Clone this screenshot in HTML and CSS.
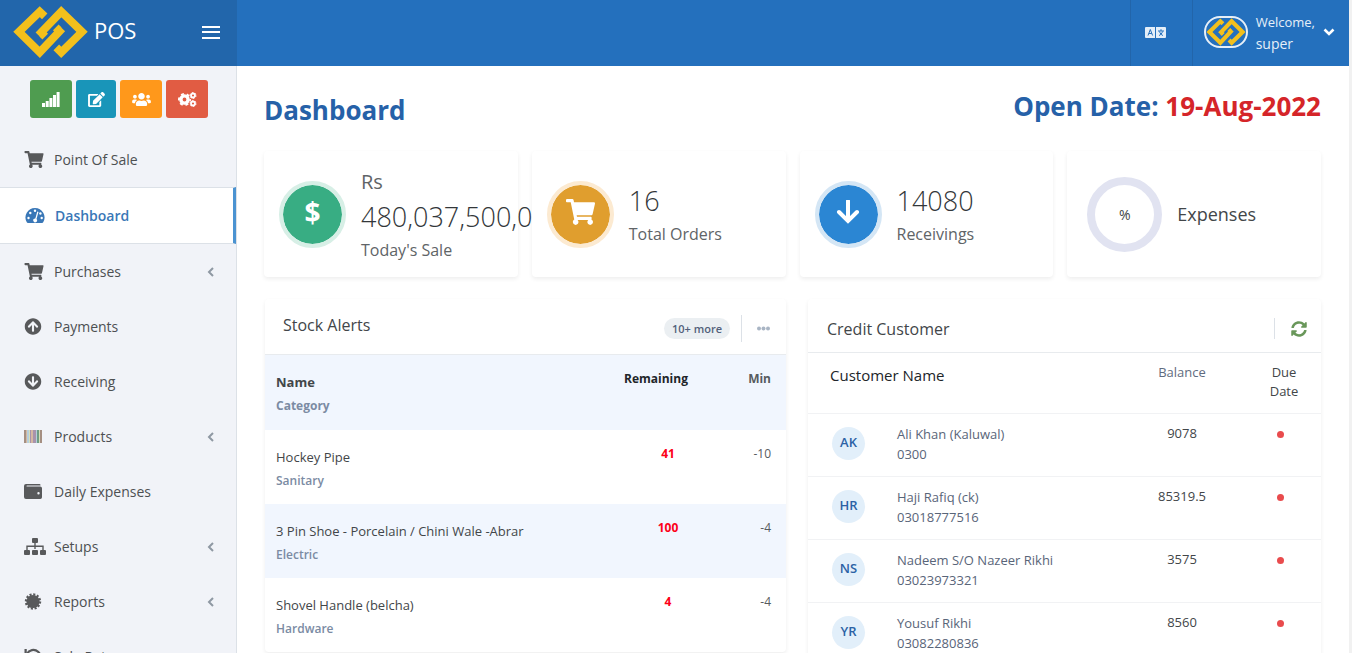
FILE: index.html
```
<!DOCTYPE html>
<html lang="en">
<head>
  <meta charset="UTF-8">
  <meta name="viewport" content="width=device-width, initial-scale=1.0">
  <title>POS - Dashboard</title>
  <link rel="stylesheet" href="styles.css">
</head>
<body>
  <!-- shared icons -->
  <svg class="sprite" aria-hidden="true">
    <symbol id="logo" viewBox="38 18 227 161">
      <g fill="none" stroke="#f3c01c" stroke-width="24" stroke-miterlimit="4">
        <path d="M134 51L119 37L56 98L119 160L187 88"/>
        <path d="M169 145L184 160L247 98L184 37L115 108"/>
      </g>
      <path fill="#f3c01c" d="M118 112l9 9 17-17-9-9zM185 85l-9-9-17 17 9 9z"/>
    </symbol>
    <symbol id="cart" viewBox="0 0 576 512">
      <path d="M528.12 301.319l47.273-208C578.806 78.301 567.391 64 551.99 64H159.208l-9.166-44.81C147.758 8.021 137.93 0 126.529 0H24C10.745 0 0 10.745 0 24v16c0 13.255 10.745 24 24 24h69.883l70.248 343.435C147.325 417.1 136 435.222 136 456c0 30.928 25.072 56 56 56s56-25.072 56-56c0-15.674-6.447-29.835-16.824-40h209.647C430.447 426.165 424 440.326 424 456c0 30.928 25.072 56 56 56s56-25.072 56-56c0-22.172-12.888-41.332-31.579-50.405l5.517-24.276c3.413-15.018-8.002-29.319-23.403-29.319H218.117l-6.545-32h293.145c11.206 0 20.92-7.754 23.403-18.681z"/>
    </symbol>
    <symbol id="chevron" viewBox="0 0 8 10">
      <path d="M6 1L2 5l4 4" fill="none" stroke="currentColor" stroke-width="2"/>
    </symbol>
  </svg>

  <header class="navbar">
    <div class="brand">
      <a class="brand-link" href="#">
        <svg class="brand-logo"><use href="#logo"/></svg>
        <span>POS</span>
      </a>
      <button class="menu-toggle" type="button" aria-label="Toggle menu">
        <svg width="18" height="13" viewBox="0 0 18 13"><path d="M0 0h18v2H0zM0 5h18v2H0zM0 11h18v2H0z" fill="#fff"/></svg>
      </button>
    </div>
    <div class="nav-right">
      <button class="nav-lang" type="button" aria-label="Language">
        <svg width="21" height="11" viewBox="0 0 21 11">
          <rect width="21" height="11" rx="1" fill="#e4eef8"/>
          <path d="M10.500 0v11" stroke="#2470bd"/>
          <g fill="none" stroke="#2470bd">
            <path d="M3 8.500L5.300 2.500 7.600 8.500M3.800 6.500h3"/>
            <path d="M13 4h6M16 2.200V4M14.500 4.500c.5 2 2 3.500 3.500 4M17.500 4.500c-.5 2-2 3.500-3.500 4"/>
          </g>
        </svg>
      </button>
      <button class="nav-user" type="button">
        <span class="avatar"><svg><use href="#logo"/></svg></span>
        <span class="user-text"><small>Welcome,</small>super</span>
        <svg width="12" height="8" viewBox="0 0 12 8"><path d="M1.500 1.500L6 6l4.500-4.500" fill="none" stroke="#fff" stroke-width="2.600"/></svg>
      </button>
    </div>
  </header>

  <div class="page">
    <aside class="sidebar">
      <div class="shortcuts">
        <button class="btn btn-success" type="button" aria-label="Statistics">
          <svg width="18" height="15" viewBox="0 0 18 15"><path d="M0 11h3v4H0zM3.700 9h3v6h-3zM7.400 6h3v9h-3zM11 3h3v12h-3zM14.600 0h3v15h-3z"/></svg>
        </button>
        <button class="btn btn-info" type="button" aria-label="Edit">
          <svg width="17" height="15" viewBox="0 0 576 512"><path d="M402.600 83.200l90.200 90.200c3.800 3.800 3.800 10 0 13.800L274.400 405.600l-92.800 10.300c-12.400 1.400-22.900-9.100-21.500-21.500l10.300-92.800L388.800 83.200c3.800-3.800 10-3.800 13.800 0zm162-22.900l-48.800-48.800c-15.200-15.200-39.900-15.200-55.200 0l-35.400 35.400c-3.800 3.800-3.800 10 0 13.800l90.200 90.200c3.800 3.800 10 3.800 13.800 0l35.400-35.400c15.200-15.300 15.200-40 0-55.200zM384 346.200V448H64V128h229.800c3.200 0 6.200-1.300 8.500-3.500l40-40c7.600-7.600 2.200-20.500-8.500-20.500H48C21.500 64 0 85.500 0 112v352c0 26.500 21.500 48 48 48h352c26.500 0 48-21.500 48-48V306.200c0-10.700-12.900-16-20.500-8.500l-40 40c-2.200 2.300-3.500 5.300-3.500 8.500z"/></svg>
        </button>
        <button class="btn btn-warning" type="button" aria-label="Customers">
          <svg width="19" height="15" viewBox="0 0 640 512"><path d="M96 224c35.300 0 64-28.700 64-64s-28.700-64-64-64-64 28.700-64 64 28.700 64 64 64zm448 0c35.300 0 64-28.700 64-64s-28.700-64-64-64-64 28.700-64 64 28.700 64 64 64zm32 32h-64c-17.600 0-33.500 7.100-45.100 18.600 40.300 22.100 68.900 62 75.100 109.400h66c17.700 0 32-14.300 32-32v-32c0-35.300-28.700-64-64-64zm-256 0c61.900 0 112-50.100 112-112S381.900 32 320 32 208 82.100 208 144s50.100 112 112 112zm76.800 32h-8.300c-20.800 10-43.900 16-68.500 16s-47.600-6-68.500-16h-8.300C179.600 288 128 339.600 128 403.200V432c0 26.500 21.500 48 48 48h288c26.500 0 48-21.500 48-48v-28.800c0-63.600-51.600-115.200-115.200-115.200zm-223.700-13.400C161.500 263.100 145.600 256 128 256H64c-35.300 0-64 28.700-64 64v32c0 17.700 14.300 32 32 32h65.900c6.300-47.400 34.900-87.300 75.200-109.400z"/></svg>
        </button>
        <button class="btn btn-danger" type="button" aria-label="Settings">
          <svg width="19" height="15" viewBox="0 0 19 15" fill="none" stroke="#fff">
            <circle cx="6.500" cy="7.500" r="3.600" stroke-width="3.400"/>
            <circle cx="6.500" cy="7.500" r="5.600" stroke-width="1.800" stroke-dasharray="2.900 2.964" stroke-dashoffset="1.300"/>
            <circle cx="15" cy="3.500" r="2" stroke-width="1.800"/>
            <circle cx="15" cy="3.500" r="3" stroke-width="1" stroke-dasharray="1.600 1.542"/>
            <circle cx="15" cy="11.500" r="2" stroke-width="1.800"/>
            <circle cx="15" cy="11.500" r="3" stroke-width="1" stroke-dasharray="1.600 1.542"/>
          </svg>
        </button>
      </div>
      <nav class="menu">
        <a href="#"><svg class="icon"><use href="#cart"/></svg>Point Of Sale</a>
        <a href="#" class="active">
          <svg class="icon" viewBox="0 0 20 17">
            <path fill="currentColor" d="M10 1a9.500 9.500 0 0 0-8.200 14.300q.4.700 1.100.700h14.200q.7 0 1.100-.7A9.500 9.500 0 0 0 10 1z"/>
            <g fill="#fff"><circle cx="3.500" cy="11" r="1.200"/><circle cx="5.300" cy="6" r="1.200"/><circle cx="10" cy="3.700" r="1.200"/><circle cx="15.400" cy="6.500" r="1.200"/><circle cx="16.700" cy="11" r="1.200"/><path d="M12.300 4.500l1.200.4-2 7a2 2 0 1 1-1.200-.5z"/></g>
          </svg>Dashboard</a>
        <a href="#"><svg class="icon"><use href="#cart"/></svg>Purchases<svg class="arrow"><use href="#chevron"/></svg></a>
        <a href="#"><svg class="icon icon-sm" viewBox="0 0 512 512"><path d="M8 256C8 119 119 8 256 8s248 111 248 248-111 248-248 248S8 393 8 256zm143.600 28.900l72.400-75.500V392c0 13.300 10.700 24 24 24h16c13.300 0 24-10.700 24-24V209.400l72.400 75.500c9.300 9.700 24.800 9.900 34.300.4l10.900-11c9.400-9.400 9.400-24.600 0-33.900L273 107.700c-9.400-9.400-24.600-9.400-33.900 0L106.300 240.400c-9.400 9.400-9.400 24.600 0 33.900l10.900 11c9.600 9.500 25.100 9.300 34.400-.4z"/></svg>Payments</a>
        <a href="#"><svg class="icon icon-sm" viewBox="0 0 512 512"><path d="M504 256c0 137-111 248-248 248S8 393 8 256 119 8 256 8s248 111 248 248zm-143.600-28.900L288 302.600V120c0-13.300-10.700-24-24-24h-16c-13.300 0-24 10.700-24 24v182.600l-72.400-75.500c-9.300-9.700-24.800-9.900-34.300-.4l-10.900 11c-9.400 9.400-9.400 24.600 0 33.900L239 404.300c9.400 9.400 24.600 9.400 33.900 0l132.700-132.700c9.400-9.400 9.400-24.600 0-33.900l-10.900-11c-9.500-9.500-25-9.300-34.300.4z"/></svg>Receiving</a>
        <a href="#">
          <svg class="icon icon-sm" viewBox="0 0 18 17">
            <path fill="#a58f82" d="M0 2h2v13H0zM16 2h2v13h-2z"/><path fill="#d5b8a2" d="M2 2h1v13H2zM7 2h2v13H7z"/><path fill="#b5cfdc" d="M3 2h2v13H3zM12 2h1v13h-1z"/><path fill="#d9ddb8" d="M5 2h1v13H5zM15 2h1v13h-1z"/><path fill="#a893ac" d="M6 2h1v13H6zM9 2h3v13H9z"/><path fill="#6f9c84" d="M13 2h2v13h-2z"/>
          </svg>Products<svg class="arrow"><use href="#chevron"/></svg></a>
        <a href="#">
          <svg class="icon icon-sm" viewBox="0 0 18 17">
            <path fill-rule="evenodd" d="M2 1h13.500a1 1 0 0 1 1 1v.5H3a.5.5 0 0 0 0 1h13.200A1.800 1.800 0 0 1 18 5.300v9A1.700 1.700 0 0 1 16.300 16H2a2 2 0 0 1-2-2V3a2 2 0 0 1 2-2zm12.500 8a1.200 1.200 0 1 0 0 2.400 1.200 1.200 0 0 0 0-2.400z"/>
          </svg>Daily Expenses</a>
        <a href="#">
          <svg class="icon icon-lg" viewBox="0 0 22 17">
            <path d="M9 0h4a1 1 0 0 1 1 1v3a1 1 0 0 1-1 1H9a1 1 0 0 1-1-1V1a1 1 0 0 1 1-1zM10.300 5h1.400v6h-1.400zM2.300 7.500h17.400V12h-1.400V9H3.700v3H2.300z"/>
            <rect x="0" y="12" width="6" height="5" rx="1"/><rect x="8" y="12" width="6" height="5" rx="1"/><rect x="16" y="12" width="6" height="5" rx="1"/>
          </svg>Setups<svg class="arrow"><use href="#chevron"/></svg></a>
        <a href="#">
          <svg class="icon icon-sm" viewBox="0 0 18 18">
            <circle cx="9" cy="9" r="7"/>
            <circle cx="9" cy="9" r="7.500" fill="none" stroke="#58595b" stroke-width="2.400" stroke-dasharray="2.200 1.727"/>
          </svg>Reports<svg class="arrow"><use href="#chevron"/></svg></a>
        <a href="#">
          <svg class="icon icon-sm" viewBox="0 0 18 18"><path d="M2.500 6.500A7.500 7.500 0 1 1 2 11" fill="none" stroke="#58595b" stroke-width="2.400"/><path d="M0 1h2.400v4.500H7V8H0z"/></svg>Sale Return</a>
      </nav>
    </aside>

    <main class="content">
      <div class="page-header">
        <h1>Dashboard</h1>
        <h2>Open Date: <span>19-Aug-2022</span></h2>
      </div>

      <section class="stats">
        <div class="card stat">
          <div class="stat-icon green">$</div>
          <div class="stat-text"><span class="currency">Rs</span><strong>480,037,500,0</strong><span>Today's Sale</span></div>
        </div>
        <div class="card stat">
          <div class="stat-icon orange"><svg width="29" height="26"><use href="#cart"/></svg></div>
          <div class="stat-text"><strong>16</strong><span>Total Orders</span></div>
        </div>
        <div class="card stat">
          <div class="stat-icon blue">
            <svg width="24" height="24" viewBox="0 0 24 24"><path d="M12 1v19M3 12l9 9 9-9" fill="none" stroke="#fff" stroke-width="4" stroke-linecap="round"/></svg>
          </div>
          <div class="stat-text"><strong>14080</strong><span>Receivings</span></div>
        </div>
        <div class="card stat stat-expenses">
          <div class="donut">%</div>
          <div class="stat-title">Expenses</div>
        </div>
      </section>

      <section class="panels">
        <div class="card">
          <div class="panel-header stock-header">
            <h3>Stock Alerts</h3>
            <span class="badge">10+ more</span>
            <button class="more" type="button" aria-label="More">
              <svg width="13" height="5" viewBox="0 0 13 5" fill="#a9b5c4"><circle cx="2" cy="2.500" r="2"/><circle cx="6.500" cy="2.500" r="2"/><circle cx="11" cy="2.500" r="2"/></svg>
            </button>
          </div>
          <table class="stock">
            <thead>
              <tr><th>Name<small>Category</small></th><th class="qty">Remaining</th><th class="min">Min</th></tr>
            </thead>
            <tbody>
              <tr><td>Hockey Pipe<small>Sanitary</small></td><td class="qty">41</td><td class="min">-10</td></tr>
              <tr><td>3 Pin Shoe - Porcelain / Chini Wale -Abrar<small>Electric</small></td><td class="qty">100</td><td class="min">-4</td></tr>
              <tr><td>Shovel Handle (belcha)<small>Hardware</small></td><td class="qty">4</td><td class="min">-4</td></tr>
            </tbody>
          </table>
        </div>

        <div class="card">
          <div class="panel-header credit-header">
            <h3>Credit Customer</h3>
            <button class="refresh" type="button" aria-label="Refresh">
              <svg width="16" height="16" viewBox="0 0 512 512" fill="#69975a"><path d="M370.720 133.280C339.458 104.008 298.888 87.962 255.848 88c-77.458.068-144.328 53.178-162.791 126.850-1.344 5.363-6.122 9.150-11.651 9.150H24.103c-7.498 0-13.194-6.807-11.807-14.176C33.933 94.924 134.813 8 256 8c66.448 0 126.791 26.136 171.315 68.685L463.030 40.970C478.149 25.851 504 36.559 504 57.941V192c0 13.255-10.745 24-24 24H345.941c-21.382 0-32.090-25.851-16.971-40.971l41.750-41.749zM32 296h134.059c21.382 0 32.090 25.851 16.971 40.971l-41.750 41.750c31.262 29.273 71.835 45.319 114.876 45.280 77.418-.070 144.315-53.144 162.787-126.849 1.344-5.363 6.122-9.150 11.651-9.150h57.304c7.498 0 13.194 6.807 11.807 14.176C478.067 417.076 377.187 504 256 504c-66.448 0-126.791-26.136-171.315-68.685L48.970 471.030C33.851 486.149 8 475.441 8 454.059V320c0-13.255 10.745-24 24-24z"/></svg>
            </button>
          </div>
          <table class="credit">
            <colgroup>
              <col class="col-initials">
              <col>
              <col class="col-balance">
              <col class="col-due">
            </colgroup>
            <thead>
              <tr><th colspan="2" class="cust">Customer Name</th><th class="balance">Balance</th><th class="due">Due<br>Date</th></tr>
            </thead>
            <tbody>
              <tr><td class="initials"><span>AK</span></td><td class="person">Ali Khan (Kaluwal)<br>0300</td><td class="balance">9078</td><td class="due"><i class="dot"></i></td></tr>
              <tr><td class="initials"><span>HR</span></td><td class="person">Haji Rafiq (ck)<br>03018777516</td><td class="balance">85319.5</td><td class="due"><i class="dot"></i></td></tr>
              <tr><td class="initials"><span>NS</span></td><td class="person">Nadeem S/O Nazeer Rikhi<br>03023973321</td><td class="balance">3575</td><td class="due"><i class="dot"></i></td></tr>
              <tr><td class="initials"><span>YR</span></td><td class="person">Yousuf Rikhi<br>03082280836</td><td class="balance">8560</td><td class="due"><i class="dot"></i></td></tr>
            </tbody>
          </table>
        </div>
      </section>
    </main>
  </div>
</body>
</html>
```
FILE: styles.css
```
* {
  box-sizing: border-box;
}

body {
  font-family: "Open Sans", "Noto Sans", sans-serif;
  font-size: 14px;
  color: #424649;
  height: 100vh;
  margin: 0;
  border-right: 3px solid #f1f1f1;
  background-color: #fff;
  overflow: hidden;
  display: flex;
  flex-direction: column;
}

button {
  font-family: inherit;
  border: none;
  background: none;
  padding: 0;
  cursor: pointer;
}

a {
  text-decoration: none;
}

h1, h2, h3 {
  margin: 0;
}

.sprite {
  display: none;
}

/* top bar */
.navbar {
  display: flex;
  justify-content: space-between;
  flex-shrink: 0;
  height: 66px;
  background-color: #2470bd;
}

.brand {
  width: 237px;
  padding: 0 17px 2px 13px;
  display: flex;
  align-items: center;
  justify-content: space-between;
  background-color: #2266ab;
}

.brand-link {
  display: flex;
  align-items: center;
  gap: 6px;
  color: #fff;
  font-size: 22px;
  line-height: 60px;
}

.brand-link span {
  padding-bottom: 4px;
}

.brand-logo {
  width: 75px;
  height: 54px;
}

.menu-toggle {
  display: flex;
}

.nav-right {
  display: flex;
}

.nav-right button {
  display: flex;
  align-items: center;
  border-left: 1px solid #2265aa;
  padding-bottom: 2px;
  color: #e6eff8;
}

.nav-lang {
  width: 62px;
  justify-content: center;
  padding-right: 12px;
}

.nav-right .nav-user {
  padding: 0 14px 2px 11px;
  gap: 8px;
  font-size: 14px;
  font-weight: 500;
}

.avatar {
  display: flex;
  width: 44px;
  height: 32px;
  border: 2px solid #e6eff8;
  border-radius: 16px;
  overflow: hidden;
}

.avatar svg {
  width: 40px;
  height: 28px;
}

.user-text {
  text-align: left;
  line-height: 22px;
  padding-top: 2px;
}

.user-text small {
  display: block;
  font-size: 13px;
}

/* sidebar */
.page {
  flex: 1;
  display: flex;
  min-height: 0;
}

.sidebar {
  width: 237px;
  flex-shrink: 0;
  background-color: #f1f3f8;
  border-right: 1px solid #dce1e7;
  overflow: hidden;
}

.shortcuts {
  display: flex;
  gap: 4px;
  padding: 14px 0 14px 30px;
}

.btn {
  width: 42px;
  height: 38px;
  border-radius: 3px;
  display: flex;
  align-items: center;
  justify-content: center;
  fill: #fff;
}

.btn-success { background-color: #4f9c50; }
.btn-info { width: 40px; background-color: #1995b9; }
.btn-warning { background-color: #ff981b; }
.btn-danger { background-color: #e15c43; }

.menu a {
  display: flex;
  align-items: center;
  height: 55px;
  padding: 0 21px 0 24px;
  color: #4d5052;
  fill: #58595b;
}

.menu .icon {
  width: 20px;
  height: 17px;
  margin-right: 10px;
}

.menu .icon-sm {
  width: 18px;
  margin-right: 12px;
}

.menu .icon-lg {
  width: 22px;
  margin-right: 8px;
}

.menu a.active {
  height: 57px;
  padding-left: 25px;
  background-color: #fff;
  border-top: 1px solid #dce1e7;
  border-bottom: 1px solid #dce1e7;
  border-right: 3px solid #4b93d1;
  color: #3977b7;
  font-weight: 600;
}

.menu .arrow {
  width: 8px;
  height: 10px;
  margin-left: auto;
  color: #8f98a3;
}

/* content */
.content {
  flex: 1;
  min-width: 0;
  padding: 20px 28px 0 27px;
}

.page-header {
  display: flex;
  justify-content: space-between;
  height: 65px;
  color: #2661a8;
}

.page-header h1 {
  font-size: 26px;
  line-height: 48px;
}

.page-header h2 {
  font-size: 26px;
  line-height: 40px;
}

.page-header h2 span {
  color: #d52529;
}

.card {
  min-width: 0;
  background-color: #fff;
  border-radius: 4px;
  box-shadow: 0 2px 4px rgba(0, 0, 0, 0.07);
}

.stats {
  display: grid;
  grid-template-columns: repeat(4, minmax(0, 1fr));
  gap: 14px;
}

.stat {
  display: flex;
  align-items: center;
  height: 126px;
  padding: 0 15px;
  gap: 15px;
}

.stat-icon {
  width: 67px;
  height: 67px;
  flex-shrink: 0;
  border: 4px solid;
  border-radius: 50%;
  background-clip: padding-box;
  display: flex;
  align-items: center;
  justify-content: center;
  color: #fff;
  fill: #fff;
  font-size: 28px;
  font-weight: bold;
}

.stat-icon svg {
  margin-bottom: 4px;
}

.green { background-color: #38ad83; border-color: #d7efe6; padding-bottom: 4px; }
.orange { background-color: #e09e2e; border-color: #fcead1; }
.blue { background-color: #2b86d3; border-color: #d4e6f5; }

.stat-text {
  white-space: nowrap;
  padding-top: 6px;
}

.stat-text span,
.stat-text strong {
  display: block;
}

.stat-text span {
  font-size: 16px;
  line-height: 32px;
  color: #606467;
}

.stat-text .currency {
  font-size: 20px;
  line-height: 28px;
  padding-bottom: 4px;
}

.stat-text strong {
  font-size: 27px;
  font-weight: 300;
  line-height: 34px;
  color: #33373a;
}

.stat-expenses {
  padding: 0 20px;
}

.donut {
  width: 75px;
  height: 75px;
  border: 8px solid #e1e3f1;
  border-radius: 50%;
  display: flex;
  align-items: center;
  justify-content: center;
}

.stat-title {
  font-size: 18px;
}

/* panels */
.panels {
  display: grid;
  grid-template-columns: 521fr 513fr;
  gap: 22px;
  align-items: start;
  margin-top: 22px;
  padding-left: 1px;
}

.panel-header {
  display: flex;
  align-items: center;
  border-bottom: 1px solid #e8ebee;
}

.panel-header h3 {
  flex: 1;
  font-size: 16px;
  font-weight: normal;
}

.stock-header {
  height: 56px;
  padding: 3px 16px 0 18px;
}

.stock-header h3 {
  padding-bottom: 6px;
}

.badge {
  padding: 0 8px;
  border-radius: 11px;
  background-color: #ebeff2;
  color: #525f7a;
  font-size: 11px;
  font-weight: 600;
  line-height: 21px;
}

.more {
  height: 27px;
  margin-left: 11px;
  padding-left: 15px;
  border-left: 1px solid #dce1e7;
  display: flex;
  align-items: center;
}

.credit-header {
  height: 54px;
  padding: 6px 14px 0 19px;
}

.refresh {
  display: flex;
  align-items: center;
  height: 21px;
  padding-left: 16px;
  border-left: 1px solid #dce1e7;
}

table {
  width: 100%;
  border-collapse: collapse;
  table-layout: fixed;
}

th, td {
  padding: 0;
  vertical-align: top;
  text-align: left;
}

.stock tr {
  height: 74px;
}

.stock thead tr {
  height: 75px;
}

.stock tr:nth-child(even),
.stock thead tr {
  background-color: #f1f6fe;
}

.stock th,
.stock td {
  padding: 15px 0 0 11px;
  font-size: 13px;
  font-weight: 500;
  line-height: 24px;
}

.stock th {
  font-weight: bold;
}

.stock small {
  display: block;
  font-size: 12px;
  color: #7b8ba3;
}

.stock td small {
  font-weight: 600;
}

.stock .qty {
  width: 130px;
  padding: 12px 0 0;
  text-align: center;
  font-size: 12px;
  font-weight: bold;
}

.stock .min {
  width: 53px;
  padding: 12px 15px 0 0;
  text-align: right;
  font-size: 12px;
  color: #575b5e;
}

.stock th.qty {
  color: #212529;
  padding-right: 24px;
}

.stock td.qty {
  color: #fd0018;
}

.stock td.min {
  font-weight: normal;
}

.credit tr {
  height: 63px;
  border-bottom: 1px solid #f1f2f4;
}

.credit thead tr {
  height: 60px;
}

.col-initials { width: 89px; }
.col-balance { width: 130px; }
.col-due { width: 74px; }

.credit th,
.credit td {
  padding-top: 10px;
  font-size: 13px;
  font-weight: normal;
  line-height: 19px;
}

.credit td {
  line-height: 20px;
}

.credit .cust {
  padding: 13px 0 0 22px;
  font-size: 15px;
  color: #212529;
}

.credit th.balance {
  color: #5f6c80;
}

.credit .initials {
  padding: 13px 0 0 24px;
}

.initials span {
  display: block;
  width: 33px;
  height: 33px;
  border-radius: 50%;
  background-color: #e2effa;
  color: #2c62a5;
  font-weight: 600;
  text-align: center;
  line-height: 31px;
}

.credit .person {
  color: #596579;
}

.credit .balance,
.credit .due {
  text-align: center;
}

.credit td.balance,
.credit td.due {
  padding-top: 9px;
}

.dot {
  display: inline-block;
  width: 7px;
  height: 7px;
  margin-right: 8px;
  border-radius: 50%;
  background-color: #e94b4d;
}
```
